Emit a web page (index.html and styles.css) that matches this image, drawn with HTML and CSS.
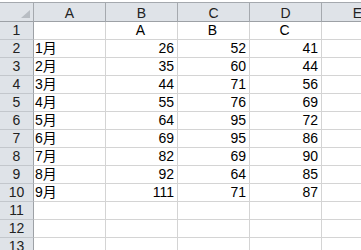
FILE: index.html
```html
<!DOCTYPE html>
<html>
<head>
<meta charset="utf-8">
<link rel="stylesheet" href="styles.css">
</head>
<body>
<div class="sheet">
  <div class="corner"><span class="tri"></span></div>
  <div class="ch">A</div><div class="ch">B</div><div class="ch">C</div><div class="ch">D</div><div class="ch">E</div>

  <div class="rh">1</div><div class="c"></div><div class="c ctr">A</div><div class="c ctr">B</div><div class="c ctr">C</div><div class="c"></div>
  <div class="rh">2</div><div class="c">1月</div><div class="c num">26</div><div class="c num">52</div><div class="c num">41</div><div class="c"></div>
  <div class="rh">3</div><div class="c">2月</div><div class="c num">35</div><div class="c num">60</div><div class="c num">44</div><div class="c"></div>
  <div class="rh">4</div><div class="c">3月</div><div class="c num">44</div><div class="c num">71</div><div class="c num">56</div><div class="c"></div>
  <div class="rh">5</div><div class="c">4月</div><div class="c num">55</div><div class="c num">76</div><div class="c num">69</div><div class="c"></div>
  <div class="rh">6</div><div class="c">5月</div><div class="c num">64</div><div class="c num">95</div><div class="c num">72</div><div class="c"></div>
  <div class="rh">7</div><div class="c">6月</div><div class="c num">69</div><div class="c num">95</div><div class="c num">86</div><div class="c"></div>
  <div class="rh">8</div><div class="c">7月</div><div class="c num">82</div><div class="c num">69</div><div class="c num">90</div><div class="c"></div>
  <div class="rh">9</div><div class="c">8月</div><div class="c num">92</div><div class="c num">64</div><div class="c num">85</div><div class="c"></div>
  <div class="rh">10</div><div class="c">9月</div><div class="c num">111</div><div class="c num">71</div><div class="c num">87</div><div class="c"></div>
  <div class="rh">11</div><div class="c"></div><div class="c"></div><div class="c"></div><div class="c"></div><div class="c"></div>
  <div class="rh">12</div><div class="c"></div><div class="c"></div><div class="c"></div><div class="c"></div><div class="c"></div>
  <div class="rh">13</div><div class="c"></div><div class="c"></div><div class="c"></div><div class="c"></div><div class="c"></div>
</div>
</body>
</html>
```
FILE: styles.css
```css
html, body {
  margin: 0;
  padding: 0;
  background: #ffffff;
  overflow: hidden;
}
body {
  padding-top: 2px;
  font-family: "Liberation Sans", "Noto Sans CJK JP", sans-serif;
  font-size: 14px;
  color: #000;
}
.sheet {
  display: grid;
  grid-template-columns: 34px 72px 72px 72px 72px 72px;
  grid-template-rows: 20px;
  grid-auto-rows: 18px;
  width: 361px;
  overflow: hidden;
}
.corner, .ch {
  box-sizing: border-box;
  background: #dfe3e8;
  border-top: 1px solid #a5a9ae;
  border-bottom: 1px solid #9da1a6;
  border-right: 1px solid #a5a9ae;
}
.corner {
  position: relative;
}
.tri {
  position: absolute;
  right: 3px;
  bottom: 3px;
  width: 0;
  height: 0;
  border-left: 9px solid transparent;
  border-bottom: 8px solid #b8bdc3;
}
.ch {
  display: flex;
  align-items: center;
  justify-content: center;
  line-height: 1;
  padding-top: 1px;
  color: #222;
}
.rh {
  box-sizing: border-box;
  background: #dfe3e8;
  border-right: 1px solid #9da1a6;
  border-bottom: 1px solid #c3c7cc;
  display: flex;
  align-items: flex-end;
  justify-content: center;
  line-height: 1;
  padding-bottom: 2px;
  color: #222;
}
.c {
  box-sizing: border-box;
  border-right: 1px solid #d4d4d4;
  border-bottom: 1px solid #d4d4d4;
  display: flex;
  align-items: flex-end;
  line-height: 1;
  padding: 0 3px 2px 1px;
  white-space: nowrap;
  overflow: hidden;
}
.num {
  justify-content: flex-end;
}
.ctr {
  justify-content: center;
}
```
